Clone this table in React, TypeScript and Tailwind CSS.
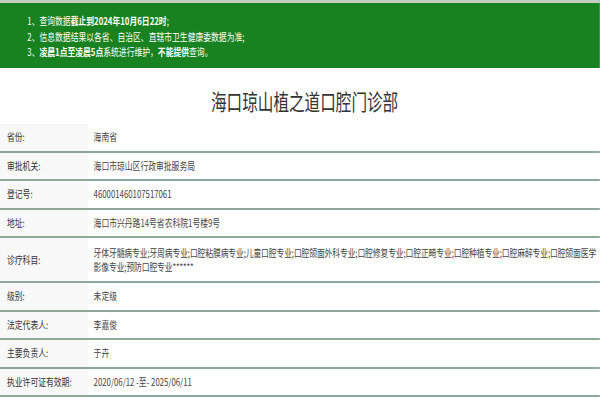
const rows: { label: string; value: React.ReactNode; tall?: boolean }[] = [
  { label: "省份:", value: "海南省" },
  { label: "审批机关:", value: "海口市琼山区行政审批服务局" },
  { label: "登记号:", value: "460001460107517061" },
  { label: "地址:", value: "海口市兴丹路14号省农科院1号楼9号" },
  {
    label: "诊疗科目:",
    tall: true,
    value: (
      <>
        <span className="block whitespace-nowrap tracking-[-0.15px]">
          牙体牙髓病专业;牙周病专业;口腔粘膜病专业;儿童口腔专业;口腔颌面外科专业;口腔修复专业;口腔正畸专业;口腔种植专业;口腔麻醉专业;口腔颌面医学
        </span>
        <span className="block whitespace-nowrap tracking-[-0.15px]">影像专业;预防口腔专业******</span>
      </>
    ),
  },
  { label: "级别:", value: "未定级" },
  { label: "法定代表人:", value: "李嘉俊" },
  { label: "主要负责人:", value: "于卉" },
  { label: "执业许可证有效期:", value: "2020/06/12 -至- 2025/06/11" },
];

export default function App() {
  return (
    <div className="h-[400px] w-[600px] overflow-hidden bg-white font-['Noto_Sans_CJK_SC',sans-serif]">
      {/* page is rendered wide and squeezed horizontally like the source capture */}
      <div className="w-[769px] origin-top-left scale-x-[0.78]">
        {/* Notice banner */}
        <div className="border-t-[3px] border-[#c4cec5] bg-[#17821f] pb-[8px] pl-[35px] pt-[10px] text-[10px] leading-[15.7px] text-white">
          <p>
            1、查询数据<span className="font-semibold">截止到2024年10月6日22时</span>;
          </p>
          <p>2、信息数据结果以各省、自治区、直辖市卫生健康委数据为准;</p>
          <p>
            3、<span className="font-semibold">凌晨1点至凌晨5点</span>系统进行维护，
            <span className="font-semibold">不能提供</span>查询。
          </p>
        </div>

        {/* Title */}
        <div className="pb-[13px] pl-[12px] pt-[22px] text-center text-[20px] leading-[21px] text-[#333]">
          <span className="inline-block scale-y-[1.1]">海口琼山植之道口腔门诊部</span>
        </div>

        {/* Info table */}
        <div>
          {rows.map((r) => (
            <div
              key={r.label}
              className={`flex border-b-2 border-[#8fa89c] text-[10px] leading-[14px] ${
                r.tall ? "h-[45px]" : "h-[28.5px]"
              }`}
            >
              <div className="flex w-[113px] shrink-0 items-center bg-[#f8f8f8] pl-[9px] text-[#333]">
                {r.label}
              </div>
              <div className="flex min-w-0 flex-1 flex-col justify-center pl-[7px] text-[#444]">{r.value}</div>
            </div>
          ))}
        </div>
      </div>
    </div>
  );
}
